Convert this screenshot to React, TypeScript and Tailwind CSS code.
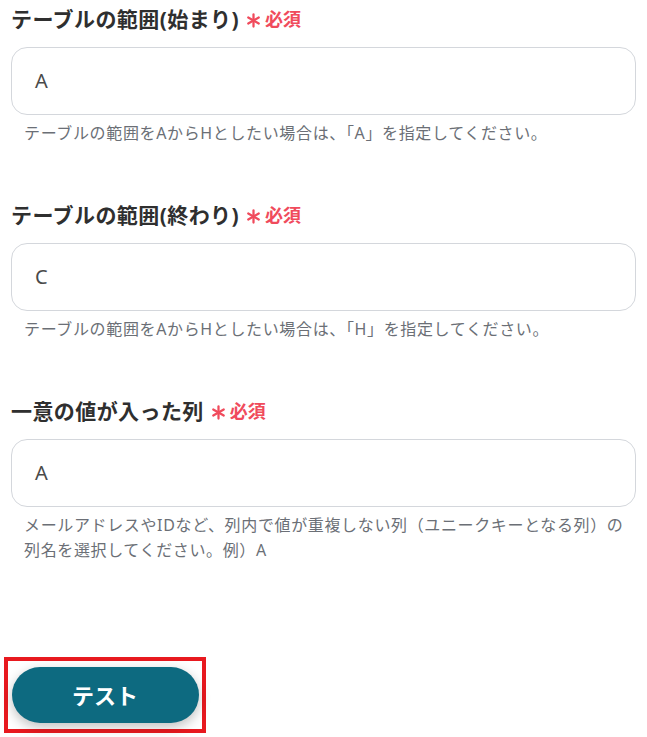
import React from 'react';

interface Field {
  label: string;
  value: string;
  help: string[];
}

const fields: Field[] = [
  {
    label: 'テーブルの範囲(始まり)',
    value: 'A',
    help: ['テーブルの範囲をAからHとしたい場合は、「A」を指定してください。'],
  },
  {
    label: 'テーブルの範囲(終わり)',
    value: 'C',
    help: ['テーブルの範囲をAからHとしたい場合は、「H」を指定してください。'],
  },
  {
    label: '一意の値が入った列',
    value: 'A',
    help: [
      'メールアドレスやIDなど、列内で値が重複しない列（ユニークキーとなる列）の',
      '列名を選択してください。例）A',
    ],
  },
];

function Asterisk() {
  return (
    <svg width="15" height="15" viewBox="0 0 16 16" className="mt-[3px]">
      <g stroke="#f04b5c" strokeWidth="2.4" strokeLinecap="round">
        <line x1="8" y1="1.5" x2="8" y2="14.5" />
        <line x1="2.4" y1="4.75" x2="13.6" y2="11.25" />
        <line x1="2.4" y1="11.25" x2="13.6" y2="4.75" />
      </g>
    </svg>
  );
}

function FormField({ field }: { field: Field }) {
  return (
    <div className="flex flex-col">
      <div className="flex items-center h-[28px]">
        <span className="text-[21px] font-bold text-[#2f2f2f] leading-[28px] tracking-[0.02em]">{field.label}</span>
        <span className="ml-[7px] flex items-center gap-[4px] text-[#f04b5c] font-bold">
          <Asterisk />
          <span className="text-[18px] leading-[28px]">必須</span>
        </span>
      </div>
      <div className="mt-[14px] h-[68px] w-full rounded-[16px] border border-[#d4d7dc] bg-white flex items-center px-[23px]">
        <span className="text-[20px] text-[#4a4a4a]">{field.value}</span>
      </div>
      <div className="mt-[6px] pl-[13px] text-[16px] leading-[25px] tracking-[0.04em] text-[#6b6f76] [font-feature-settings:'chws']">
        {field.help.map((line, i) => (
          <div key={i}>{line}</div>
        ))}
      </div>
    </div>
  );
}

export default function App() {
  return (
    <div
      className="w-[647px] h-[737px] bg-white overflow-hidden"
      style={{ fontFamily: '"Noto Sans", "Noto Sans CJK JP", sans-serif' }}
    >
      <div className="px-[11px] pt-[5px] flex flex-col gap-[55px]">
        {fields.map((f, i) => (
          <FormField key={i} field={f} />
        ))}
      </div>
      <div className="mt-[94px] ml-[4px] w-[202px] h-[76px] border-4 border-[#e8191f] flex items-center justify-center">
        <button className="w-[187px] h-[56px] rounded-full bg-[#0d6a80] text-white text-[22px] font-bold shadow-[0_4px_12px_rgba(0,0,0,0.25)]">
          テスト
        </button>
      </div>
    </div>
  );
}
